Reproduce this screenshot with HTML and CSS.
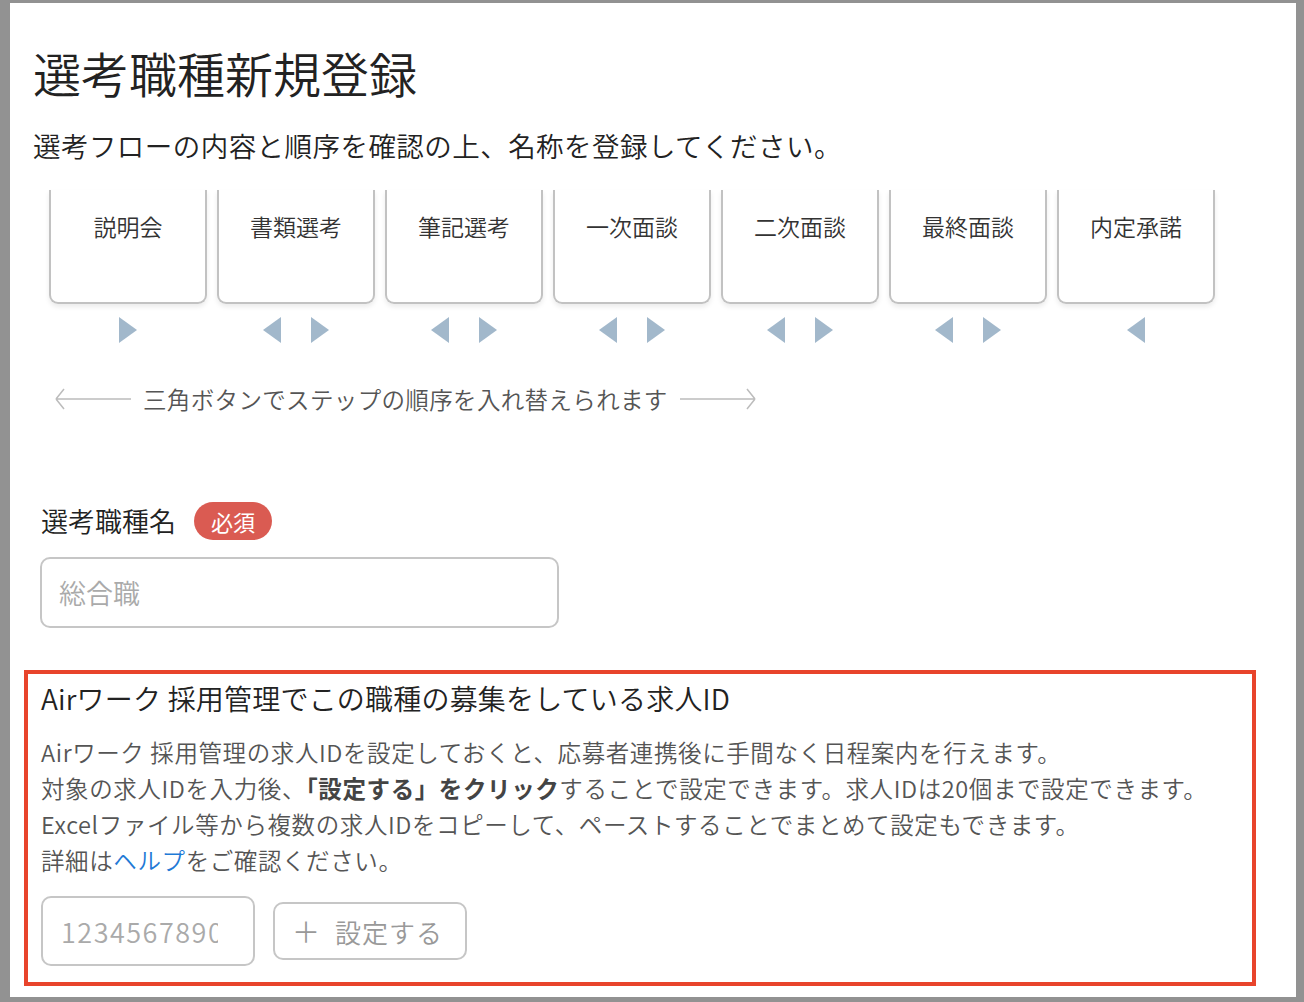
FILE: index.html
```html
<!DOCTYPE html>
<html lang="ja">

<head>
  <meta charset="UTF-8">
  <meta name="viewport" content="width=device-width, initial-scale=1.0">
  <title>選考職種新規登録</title>
  <link rel="stylesheet" href="styles.css">
</head>

<body>
  <div class="window">
    <h1 class="title">選考職種新規登録</h1>
    <p class="lead">選考フローの内容と順序を確認の上、名称を登録してください。</p>

    <!-- Steps -->
    <div class="steps">
      <div class="step">
        <div class="step-card">説明会</div>
        <div class="step-move">
          <button class="move move-right" aria-label="右へ"><svg viewBox="0 0 18 26"><polygon points="0,0 18,13 0,26" /></svg></button>
        </div>
      </div>
      <div class="step">
        <div class="step-card">書類選考</div>
        <div class="step-move">
          <button class="move" aria-label="左へ"><svg viewBox="0 0 18 26"><polygon points="18,0 0,13 18,26" /></svg></button>
          <button class="move" aria-label="右へ"><svg viewBox="0 0 18 26"><polygon points="0,0 18,13 0,26" /></svg></button>
        </div>
      </div>
      <div class="step">
        <div class="step-card">筆記選考</div>
        <div class="step-move">
          <button class="move" aria-label="左へ"><svg viewBox="0 0 18 26"><polygon points="18,0 0,13 18,26" /></svg></button>
          <button class="move" aria-label="右へ"><svg viewBox="0 0 18 26"><polygon points="0,0 18,13 0,26" /></svg></button>
        </div>
      </div>
      <div class="step">
        <div class="step-card">一次面談</div>
        <div class="step-move">
          <button class="move" aria-label="左へ"><svg viewBox="0 0 18 26"><polygon points="18,0 0,13 18,26" /></svg></button>
          <button class="move" aria-label="右へ"><svg viewBox="0 0 18 26"><polygon points="0,0 18,13 0,26" /></svg></button>
        </div>
      </div>
      <div class="step">
        <div class="step-card">二次面談</div>
        <div class="step-move">
          <button class="move" aria-label="左へ"><svg viewBox="0 0 18 26"><polygon points="18,0 0,13 18,26" /></svg></button>
          <button class="move" aria-label="右へ"><svg viewBox="0 0 18 26"><polygon points="0,0 18,13 0,26" /></svg></button>
        </div>
      </div>
      <div class="step">
        <div class="step-card">最終面談</div>
        <div class="step-move">
          <button class="move" aria-label="左へ"><svg viewBox="0 0 18 26"><polygon points="18,0 0,13 18,26" /></svg></button>
          <button class="move" aria-label="右へ"><svg viewBox="0 0 18 26"><polygon points="0,0 18,13 0,26" /></svg></button>
        </div>
      </div>
      <div class="step">
        <div class="step-card">内定承諾</div>
        <div class="step-move">
          <button class="move" aria-label="左へ"><svg viewBox="0 0 18 26"><polygon points="18,0 0,13 18,26" /></svg></button>
        </div>
      </div>
    </div>

    <div class="hint">
      <svg class="hint-arrow" viewBox="0 0 76 24"><path d="M1 12 H76 M1 12 L9 2 M1 12 L9 22" /></svg>
      <span>三角ボタンでステップの順序を入れ替えられます</span>
      <svg class="hint-arrow" viewBox="0 0 76 24"><path d="M0 12 H75 M75 12 L67 2 M75 12 L67 22" /></svg>
    </div>

    <!-- Name field -->
    <div class="field">
      <div class="field-label">
        <label for="job-name">選考職種名</label>
        <span class="badge">必須</span>
      </div>
      <input id="job-name" class="text-input" type="text" placeholder="総合職">
    </div>

    <!-- Job ID -->
    <section class="job-id">
      <h2 class="job-id-title">Airワーク 採用管理でこの職種の募集をしている求人ID</h2>
      <p class="job-id-text">
        Airワーク 採用管理の求人IDを設定しておくと、応募者連携後に手間なく日程案内を行えます。<br>
        対象の求人IDを入力後、<strong>「設定する」をクリック</strong>することで設定できます。求人IDは20個まで設定できます。<br>
        Excelファイル等から複数の求人IDをコピーして、ペーストすることでまとめて設定もできます。<br>
        詳細は<a href="#">ヘルプ</a>をご確認ください。
      </p>
      <div class="job-id-row">
        <input class="id-input" type="text" placeholder="1234567890">
        <button class="add-button"><span class="plus">＋</span>設定する</button>
      </div>
    </section>
  </div>
</body>

</html>
```

FILE: styles.css
```css
body {
  margin: 0;
  background-color: #929292;
  font-family: "Noto Sans CJK JP", "Noto Sans", sans-serif;
  font-weight: 350;
  color: #222;
}

.window {
  box-sizing: border-box;
  margin: 3px 8px 0 10px;
  height: 994px;
  padding: 39px 0 0 14px;
  background-color: #fff;
  overflow: hidden;
}

.title {
  margin: 0 0 0 9px;
  font-size: 48px;
  font-weight: 350;
  line-height: 60px;
}

.lead {
  margin: 23px 0 0 9px;
  font-size: 27.5px;
  line-height: 40px;
  letter-spacing: 0.45px;
}

/* Steps */
.steps {
  display: flex;
  gap: 10px;
  margin: 25px 0 0 25px;
}

.step {
  width: 158px;
}

.step-card {
  box-sizing: border-box;
  height: 114px;
  padding-top: 21px;
  border: 2px solid #c2c2c2;
  border-top: none;
  border-radius: 0 0 9px 9px;
  box-shadow: 0 3px 5px rgba(0, 0, 0, 0.08);
  text-align: center;
  font-size: 23px;
  line-height: 30px;
  color: #333;
}

.step-move {
  display: flex;
  justify-content: center;
  gap: 30px;
  margin-top: 13px;
}

.move {
  padding: 0;
  border: none;
  background: none;
  width: 18px;
  height: 26px;
  cursor: pointer;
}

.move svg {
  display: block;
  width: 18px;
  height: 26px;
  fill: #a2b8cb;
}

.hint {
  display: flex;
  align-items: center;
  gap: 12px;
  margin: 42px 0 0 31px;
  font-size: 23.5px;
  line-height: 28px;
  letter-spacing: 0.35px;
  color: #555;
}

.hint-arrow {
  width: 76px;
  height: 24px;
  fill: none;
  stroke: #bcbcbc;
  stroke-width: 1.5;
}

/* Field */
.field {
  margin: 88px 0 0 16px;
}

.field-label {
  display: flex;
  align-items: center;
  gap: 18px;
  padding-left: 1px;
  font-size: 27px;
}

.badge {
  height: 38px;
  padding: 0 17px;
  border-radius: 19px;
  background-color: #da5b52;
  color: #fff;
  font-size: 22px;
  font-weight: 400;
  line-height: 38px;
}

.text-input {
  box-sizing: border-box;
  display: block;
  width: 519px;
  height: 71px;
  margin-top: 17px;
  padding: 0 17px;
  border: 2px solid #c6c6c6;
  border-radius: 10px;
  font-family: inherit;
  font-size: 27px;
  font-weight: 350;
  outline: none;
}

.text-input::placeholder,
.id-input::placeholder {
  color: #aaa;
}

/* Job ID */
.job-id {
  box-sizing: border-box;
  width: 1232px;
  margin-top: 42px;
  padding: 6px 13px 16px;
  border: 4px solid #e8442b;
}

.job-id-title {
  margin: 0;
  font-size: 28px;
  font-weight: 350;
  line-height: 36px;
  letter-spacing: 0.2px;
}

.job-id-text {
  margin: 18px 0 0;
  font-size: 23.5px;
  line-height: 36px;
  letter-spacing: 0.6px;
  color: #555;
}

.job-id-text strong {
  font-weight: 700;
  color: #444;
}

.job-id-text a {
  color: #1f7ad6;
  text-decoration: none;
}

.job-id-row {
  display: flex;
  align-items: center;
  gap: 18px;
  margin-top: 18px;
}

.id-input {
  box-sizing: border-box;
  width: 214px;
  height: 70px;
  padding: 0 35px 0 18px;
  border: 2px solid #c6c6c6;
  border-radius: 10px;
  font-family: inherit;
  font-size: 27px;
  font-weight: 350;
  letter-spacing: 1.5px;
  outline: none;
}

.add-button {
  box-sizing: border-box;
  display: flex;
  align-items: center;
  gap: 14px;
  height: 58px;
  padding: 0 22px 0 17px;
  border: 2px solid #c6c6c6;
  border-radius: 10px;
  background-color: #fff;
  font-family: inherit;
  font-size: 26px;
  font-weight: 350;
  letter-spacing: 1px;
  color: #999;
  cursor: pointer;
}

.plus {
  font-size: 28px;
}
```
